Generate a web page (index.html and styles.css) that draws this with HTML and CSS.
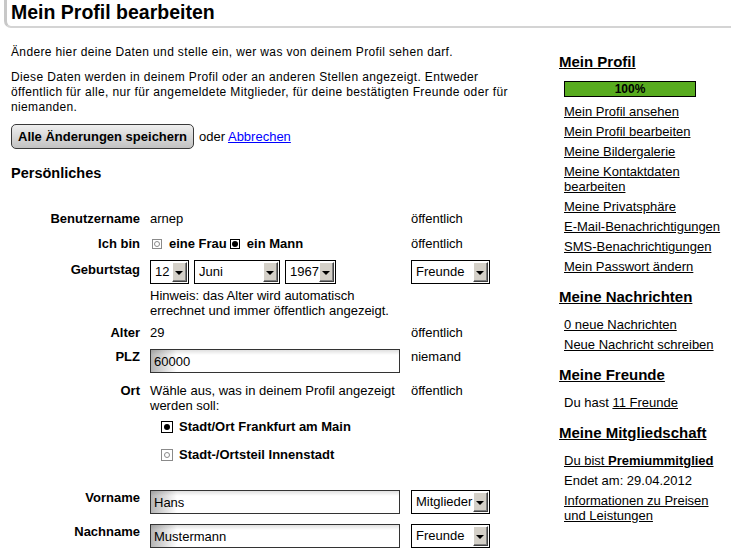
FILE: index.html
```html
<!DOCTYPE html>
<html lang="de">
<head>
    <meta charset="UTF-8">
    <meta name="viewport" content="width=device-width, initial-scale=1.0">
    <title>Mein Profil bearbeiten</title>
    <link rel="stylesheet" href="styles.css">
</head>
<body>
    <h1 class="page-title">Mein Profil bearbeiten</h1>

    <div class="layout">
        <div class="main">
            <p class="intro">Ändere hier deine Daten und stelle ein, wer was von deinem Profil sehen darf.</p>
            <p class="intro">Diese Daten werden in deinem Profil oder an anderen Stellen angezeigt. Entweder öffentlich für alle, nur für angemeldete Mitglieder, für deine bestätigten Freunde oder für niemanden.</p>

            <div class="actions">
                <button class="save-btn">Alle Änderungen speichern</button>
                <span class="cancel">oder <a href="#">Abbrechen</a></span>
            </div>

            <h2 class="section-title">Persönliches</h2>

            <div class="form">
                <div class="row">
                    <div class="label">Benutzername</div>
                    <div class="value">arnep</div>
                    <div class="vis">öffentlich</div>
                </div>

                <div class="row">
                    <div class="label">Ich bin</div>
                    <div class="value choice">
                        <span class="radio"></span><b>eine Frau</b>
                        <span class="radio checked"></span><b>ein Mann</b>
                    </div>
                    <div class="vis">öffentlich</div>
                </div>

                <div class="row row-birthday">
                    <div class="label label-offset">Geburtstag</div>
                    <div class="value">
                        <div class="date-selects">
                            <span class="select w-day"><span class="select-value">12</span><span class="select-arrow"></span></span>
                            <span class="select w-month"><span class="select-value">Juni</span><span class="select-arrow"></span></span>
                            <span class="select w-year"><span class="select-value">1967</span><span class="select-arrow"></span></span>
                        </div>
                        <div class="hint">Hinweis: das Alter wird automatisch errechnet und immer öffentlich angezeigt.</div>
                    </div>
                    <div class="vis">
                        <span class="select w-vis"><span class="select-value">Freunde</span><span class="select-arrow"></span></span>
                    </div>
                </div>

                <div class="row row-age">
                    <div class="label">Alter</div>
                    <div class="value">29</div>
                    <div class="vis">öffentlich</div>
                </div>

                <div class="row row-zip">
                    <div class="label">PLZ</div>
                    <div class="value"><input class="text-input" type="text" value="60000"></div>
                    <div class="vis">niemand</div>
                </div>

                <div class="row">
                    <div class="label">Ort</div>
                    <div class="value">
                        Wähle aus, was in deinem Profil angezeigt werden soll:
                        <div class="place-option first"><span class="radio big checked"></span><b>Stadt/Ort Frankfurt am Main</b></div>
                        <div class="place-option"><span class="radio big"></span><b>Stadt-/Ortsteil Innenstadt</b></div>
                    </div>
                    <div class="vis">öffentlich</div>
                </div>

                <div class="row row-names">
                    <div class="label">Vorname</div>
                    <div class="value"><input class="text-input" type="text" value="Hans"></div>
                    <div class="vis">
                        <span class="select w-vis"><span class="select-value">Mitglieder</span><span class="select-arrow"></span></span>
                    </div>
                </div>

                <div class="row">
                    <div class="label">Nachname</div>
                    <div class="value"><input class="text-input" type="text" value="Mustermann"></div>
                    <div class="vis">
                        <span class="select w-vis"><span class="select-value">Freunde</span><span class="select-arrow"></span></span>
                    </div>
                </div>
            </div>
        </div>

        <div class="sidebar">
            <h3><a href="#">Mein Profil</a></h3>
            <div class="progress">100%</div>
            <ul class="side-links">
                <li><a href="#">Mein Profil ansehen</a></li>
                <li><a href="#">Mein Profil bearbeiten</a></li>
                <li><a href="#">Meine Bildergalerie</a></li>
                <li><a href="#">Meine Kontaktdaten bearbeiten</a></li>
                <li><a href="#">Meine Privatsphäre</a></li>
                <li><a href="#">E-Mail-Benachrichtigungen</a></li>
                <li><a href="#">SMS-Benachrichtigungen</a></li>
                <li><a href="#">Mein Passwort ändern</a></li>
            </ul>

            <h3><a href="#">Meine Nachrichten</a></h3>
            <ul class="side-links">
                <li><a href="#">0 neue Nachrichten</a></li>
                <li><a href="#">Neue Nachricht schreiben</a></li>
            </ul>

            <h3><a href="#">Meine Freunde</a></h3>
            <ul class="side-links">
                <li>Du hast <a href="#">11 Freunde</a></li>
            </ul>

            <h3><a href="#">Meine Mitgliedschaft</a></h3>
            <ul class="side-links">
                <li><a href="#">Du bist <b>Premiummitglied</b></a></li>
                <li>Endet am: 29.04.2012</li>
                <li><a href="#">Informationen zu Preisen und Leistungen</a></li>
            </ul>
        </div>
    </div>
</body>
</html>
```

FILE: styles.css
```css
body {
    margin: 0;
    font-family: "Liberation Sans", Arial, sans-serif;
    font-size: 13px;
    color: #000;
    background-color: #fff;
}
.page-title {
    margin: 0 0 0 4px;
    padding: 0 0 2px 4px;
    font-size: 19.5px;
    line-height: 24px;
    border-left: 3px solid #c8c8c8;
    border-bottom: 2px solid #d4d4d4;
    border-bottom-left-radius: 7px;
}
.layout {
    display: flex;
    align-items: flex-start;
}
.main {
    width: 510px;
    padding-left: 11px;
}
.intro {
    margin: 17px 0 0;
    font-size: 12px;
    line-height: 15px;
    letter-spacing: 0.36px;
}
.intro + .intro {
    margin-top: 10px;
}
.actions {
    display: flex;
    align-items: center;
    margin-top: 9px;
}
.save-btn {
    height: 25px;
    padding: 0 6px;
    font: bold 13px "Liberation Sans", Arial, sans-serif;
    color: #000;
    border: 1px solid #3a3a3a;
    border-radius: 5px;
    background: linear-gradient(#efefef, #c2c2c2);
}
.cancel {
    margin-left: 5px;
}
.cancel a {
    color: #00f;
}
.section-title {
    margin: 15px 0 29px;
    font-size: 14.5px;
    line-height: 18px;
}

/* form rows: label | value | visibility */
.row {
    display: grid;
    grid-template-columns: 129px 251px auto;
    column-gap: 10px;
    align-items: start;
    margin-top: 10px;
    line-height: 15px;
}
.row:first-child {
    margin-top: 0;
}
.row-birthday {
    margin-top: 9px;
}
.row-age {
    margin-top: 7px;
}
.row-zip {
    margin-top: 9px;
}
.row-names {
    margin-top: 28px;
}
.label {
    font-weight: bold;
    text-align: right;
}
.label-offset {
    padding-top: 2px;
}
.choice {
    display: flex;
    align-items: center;
}
.choice .radio {
    margin: 0 7px 0 2px;
}
.choice b + .radio {
    margin-left: 3px;
}
.radio {
    display: inline-flex;
    align-items: center;
    justify-content: center;
    width: 10px;
    height: 10px;
    box-sizing: border-box;
    border: 1px solid #8a8a8a;
    background-color: #fff;
    flex-shrink: 0;
}
.radio::after {
    content: "";
    width: 6px;
    height: 6px;
    box-sizing: border-box;
    border: 1px solid #8a8a8a;
    border-radius: 50%;
}
.radio.checked {
    border-color: #000;
}
.radio.checked::after {
    width: 6px;
    height: 6px;
    border: none;
    background-color: #000;
}
.radio.big {
    width: 12px;
    height: 12px;
}
.place-option {
    display: flex;
    align-items: center;
    margin: 13px 0 0 11px;
}
.place-option.first {
    margin-top: 6px;
}
.place-option .radio {
    margin-right: 6px;
}
.date-selects {
    display: flex;
    gap: 5px;
}
.hint {
    margin-top: 4px;
}

/* classic drop-down boxes */
.select {
    display: inline-flex;
    height: 24px;
    box-sizing: border-box;
    padding: 1px;
    border: 1px solid #000;
    background-color: #fff;
    vertical-align: top;
}
.select-value {
    flex: 1;
    padding-left: 3px;
    line-height: 20px;
    white-space: nowrap;
    overflow: hidden;
}
.select-arrow {
    display: flex;
    align-items: center;
    justify-content: center;
    width: 15px;
    box-sizing: border-box;
    background-color: #d4d0c8;
    border: 1px solid;
    border-color: #fff #404040 #404040 #fff;
    box-shadow: inset -1px -1px #808080;
}
.select-arrow::after {
    content: "";
    border-left: 4px solid transparent;
    border-right: 4px solid transparent;
    border-top: 4px solid #000;
    margin: 1px 1px 0 0;
}
.w-day {
    width: 39px;
}
.w-month {
    width: 86px;
}
.w-year {
    width: 51px;
}
.w-vis {
    width: 79px;
}
.text-input {
    display: block;
    width: 250px;
    height: 24px;
    box-sizing: border-box;
    margin: 0;
    padding: 0 3px;
    font: 13px "Liberation Sans", Arial, sans-serif;
    color: #000;
    border: 1px solid #333;
    background-color: #fff;
    background-image: linear-gradient(to bottom, rgba(0, 0, 0, 0.12), rgba(0, 0, 0, 0) 5px),
        linear-gradient(to right, #b4b4b4, #fff 26px);
}

/* right column */
.sidebar {
    width: 172px;
    margin-left: 38px;
    padding-top: 25px;
}
.sidebar h3 {
    margin: 14px 0 11px;
    font-size: 15px;
    line-height: 18px;
}
.sidebar h3:first-child {
    margin-top: 0;
    margin-bottom: 10px;
}
.sidebar a {
    color: #000;
    text-decoration: underline;
}
.progress {
    width: 132px;
    height: 16px;
    box-sizing: border-box;
    margin: 0 0 7px 5px;
    border: 1px solid #000;
    background-color: #58ab1f;
    text-align: center;
    font-size: 12px;
    font-weight: bold;
    line-height: 14px;
}
.side-links {
    list-style: none;
    width: 160px;
    margin: 0;
    padding: 0 0 0 5px;
}
.side-links li {
    line-height: 15px;
    margin-bottom: 5px;
}
```
